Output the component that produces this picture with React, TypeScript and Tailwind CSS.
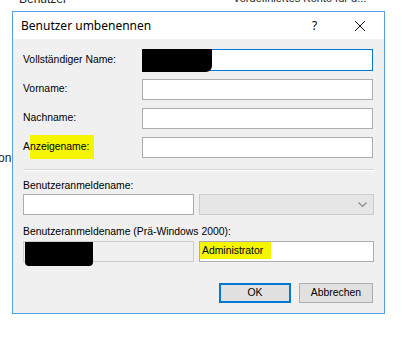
import React from "react";

const titleFont = { fontFamily: '"Segoe UI", "Noto Sans", "Open Sans", sans-serif' };
const bodyFont = { fontFamily: '"Liberation Sans", Arial, sans-serif' };

function Field({ label, hl, children }: { label: string; hl?: boolean; children?: React.ReactNode }) {
  return (
    <div className="flex items-center h-[22px]">
      <div className="w-[119px] text-[10.4px] text-[#000] leading-[12px]">
        {hl ? (
          <span>
            A<span className="bg-[#f5f500] pt-[6px] pb-[7px] pr-[5px]">nzeigename:</span>
          </span>
        ) : (
          label
        )}
      </div>
      {children}
    </div>
  );
}

export default function App() {
  return (
    <div className="w-[402px] h-[340px] bg-white relative overflow-hidden text-[#000]" style={bodyFont}>
      <div className="absolute left-[19px] top-[-10px] text-[12px] text-[#222]">Benutzer</div>
      <div className="absolute left-[233px] top-[-10px] text-[11px] text-[#222]">Vordefiniertes Konto für d...</div>
      <div className="absolute left-[-2px] top-[149px] text-[12px] text-[#222]">on</div>
      <div className="ml-[12px] pt-[11px]">
        <div className="w-[373px] h-[303px] border border-[#5aa0e0] bg-[#f0f0f0] flex flex-col">
          <div className="h-[27px] bg-white flex items-center pl-[8px] text-[12px] shrink-0" style={titleFont}>
            <span className="flex-1 pt-[1px]">Benutzer umbenennen</span>
            <span className="w-[12px] text-[12px] mr-[30px]">?</span>
            <svg width="12" height="12" viewBox="0 0 12 12" className="mr-[18px]">
              <path d="M1 1 L11 11 M11 1 L1 11" stroke="#111" strokeWidth="1" />
            </svg>
          </div>
          <div className="pl-[10px] pr-[10px] pt-[10px] flex flex-col">
            <Field label="Vollständiger Name:">
              <div className="relative w-[231px] h-[22px] bg-white border border-[#0078d7]">
                <div className="absolute left-[-1px] top-[-1px] w-[70px] h-[23px] bg-black rounded-br-[6px]" />
              </div>
            </Field>
            <div className="h-[7px]" />
            <Field label="Vorname:">
              <div className="w-[231px] h-[21px] bg-white border border-[#adadad]" />
            </Field>
            <div className="h-[7px]" />
            <Field label="Nachname:">
              <div className="w-[231px] h-[21px] bg-white border border-[#adadad]" />
            </Field>
            <div className="h-[7px]" />
            <Field label="Anzeigename:" hl>
              <div className="w-[231px] h-[21px] bg-white border border-[#adadad]" />
            </Field>
            <div className="h-[11px]" />
            <div className="h-[1px] w-[350px] bg-[#d5d5d5] ml-[1px]" />
            <div className="h-[1px] w-[350px] bg-white ml-[1px]" />
            <div className="text-[10.4px] h-[14px] leading-[14px] mt-[8px]">Benutzeranmeldename:</div>
            <div className="flex mt-[1px] h-[21px]">
              <div className="w-[171px] h-[21px] bg-white border border-[#adadad]" />
              <div className="ml-[5px] w-[175px] h-[21px] bg-[#e6e6e6] border border-[#cccccc] flex items-center justify-end pr-[6px]">
                <svg width="9" height="6" viewBox="0 0 9 6">
                  <path d="M0.5 0.5 L4.5 4.5 L8.5 0.5" stroke="#888" strokeWidth="1.2" fill="none" />
                </svg>
              </div>
            </div>
            <div className="text-[10.4px] h-[14px] leading-[14px] mt-[10px]">Benutzeranmeldename (Prä-Windows 2000):</div>
            <div className="flex mt-[2px] h-[21px]">
              <div className="relative w-[171px] h-[21px] bg-[#f0f0f0] border border-[#cccccc]">
                <div className="absolute left-[1px] top-[0px] w-[68px] h-[24px] bg-black rounded-b-[4px]" />
              </div>
              <div className="ml-[5px] w-[175px] h-[21px] bg-white border border-[#adadad] flex items-start">
                <span className="bg-[#f5f500] text-[10.4px] leading-[12px] pl-[2px] pt-[3px] pb-[2px] pr-[8px]">Administrator</span>
              </div>
            </div>
            <div className="flex justify-end mt-[21px] pr-[1px]">
              <button className="w-[72px] h-[20px] bg-[#e1e1e1] border-2 border-[#0078d7] text-[10.4px] leading-none">OK</button>
              <button className="ml-[8px] w-[74px] h-[20px] bg-[#e1e1e1] border border-[#adadad] text-[10.4px] leading-none">Abbrechen</button>
            </div>
          </div>
        </div>
      </div>
    </div>
  );
}
